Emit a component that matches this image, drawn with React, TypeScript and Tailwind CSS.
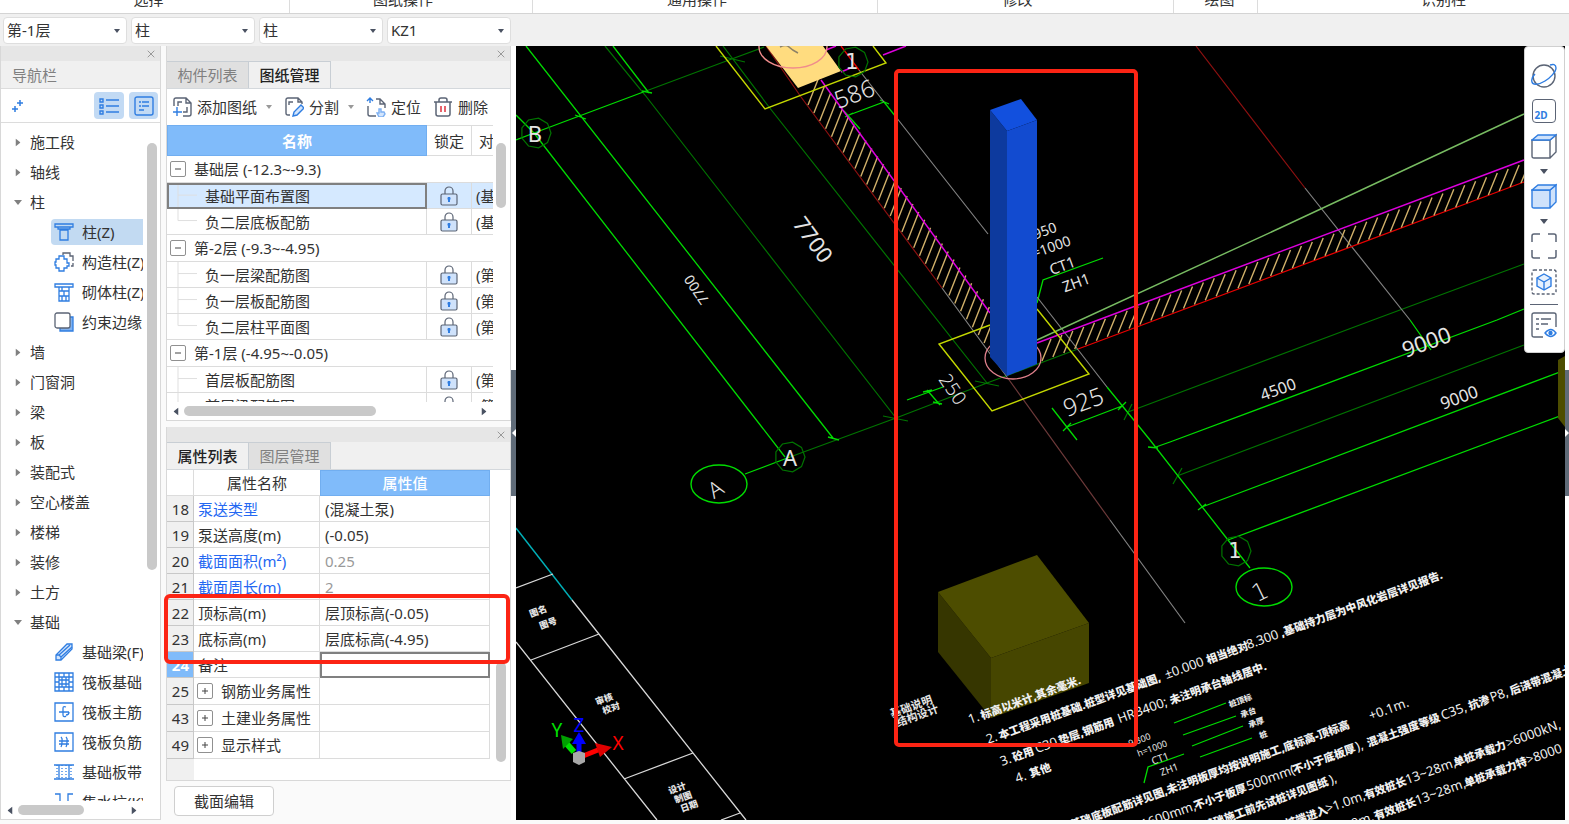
import React from 'react';
import clsx from 'clsx';
import { X } from 'lucide-react';

/* ---------- data ---------- */

const ribbonGroups = [
  { label: '选择', className: 'w-[290px] pl-2' },
  { label: '图纸操作', className: 'w-[243px] pr-4' },
  { label: '通用操作', className: 'w-[345px] pr-4' },
  { label: '修改', className: 'w-[296px] pr-4' },
  { label: '绘图', className: 'w-[84px] pl-2' },
  { label: '识别柱', className: 'flex-1 pl-[60px]' },
];

const filters = [
  { label: '楼层', value: '第-1层' },
  { label: '构件分类', value: '柱' },
  { label: '构件类型', value: '柱' },
  { label: '构件', value: 'KZ1' },
];

interface NavItem {
  label: string;
  icon: string;
  active?: boolean;
}

interface NavGroup {
  label: string;
  items?: NavItem[];
}

const navGroups: NavGroup[] = [
  { label: '施工段' },
  { label: '轴线' },
  {
    label: '柱',
    items: [
      { label: '柱(Z)', icon: 'column', active: true },
      { label: '构造柱(Z)', icon: 'structural' },
      { label: '砌体柱(Z)', icon: 'masonry' },
      { label: '约束边缘', icon: 'edge' },
    ],
  },
  { label: '墙' },
  { label: '门窗洞' },
  { label: '梁' },
  { label: '板' },
  { label: '装配式' },
  { label: '空心楼盖' },
  { label: '楼梯' },
  { label: '装修' },
  { label: '土方' },
  {
    label: '基础',
    items: [
      { label: '基础梁(F)', icon: 'beam' },
      { label: '筏板基础', icon: 'raft' },
      { label: '筏板主筋', icon: 'mainBar' },
      { label: '筏板负筋', icon: 'negBar' },
      { label: '基础板带', icon: 'strip' },
      { label: '集水坑(K)', icon: 'sump' },
    ],
  },
];

const drawingGroups = [
  { label: '基础层 (-12.3~-9.3)', floor: '(基', drawings: ['基础平面布置图', '负二层底板配筋'] },
  { label: '第-2层 (-9.3~-4.95)', floor: '(第', drawings: ['负一层梁配筋图', '负一层板配筋图', '负二层柱平面图'] },
  { label: '第-1层 (-4.95~-0.05)', floor: '(第', drawings: ['首层板配筋图', '首层梁配筋图'] },
];

const selectedDrawing = '基础平面布置图';

const properties = [
  { no: 18, name: '泵送类型', value: '(混凝土泵)', link: true },
  { no: 19, name: '泵送高度(m)', value: '(-0.05)' },
  { no: 20, name: '截面面积(m²)', value: '0.25', link: true, readOnly: true },
  { no: 21, name: '截面周长(m)', value: '2', link: true, readOnly: true },
  { no: 22, name: '顶标高(m)', value: '层顶标高(-0.05)' },
  { no: 23, name: '底标高(m)', value: '层底标高(-4.95)' },
  { no: 24, name: '备注', value: '', active: true },
  { no: 25, name: '钢筋业务属性', value: '', group: true },
  { no: 43, name: '土建业务属性', value: '', group: true },
  { no: 49, name: '显示样式', value: '', group: true },
];

/* ---------- icons ---------- */

const BLUE = '#2f7de1';
const SLATE = '#5b6475';

const navIconPaths: Record<string, React.ReactNode> = {
  column: <path d="M1 2h18v3H1zM4 5v2h12V5M6 8h8v10H6z" />,
  structural: (
    <>
      <path stroke={SLATE} d="M9 3V1h7v3h3v5M19 11v3h-2" />
      <path d="M5 4h5v3h3v4h2v3h-2v2h-3v3H5v-3H2v-3H1v-3h1V7h3z" />
    </>
  ),
  masonry: <path d="M1 2h18v3H1zM5 5v14h10V5M5 9h10M5 14h10M10 9v5M8 5v4M8 14v5M12 14v5" />,
  edge: (
    <>
      <path fill="#7fb1f0" d="M16 5h3v14H6v-3" />
      <rect x="1" y="1" width="15" height="15" rx="2" fill="#fff" stroke={SLATE} />
    </>
  ),
  beam: (
    <>
      <path fill="#d3e5fc" d="M2 18v-5L13 2h5v5L7 18z" />
      <path d="M2 13h3l2 2v3M5 13L16 3M7 15L18 5" />
    </>
  ),
  raft: <path d="M1 1h18v18H1zM5 1v18M15 1v18M1 5h18M1 15h18M10 1v4M10 15v4M1 10h4M15 10h4M8 5v10M12 5v10M5 8h10M5 12h10" />,
  mainBar: <path d="M1 1h18v18H1zM12 5c-3-1-3 0-3 2v6c0 2 2 2 3 1M5 10h10M15 10c0 2-1 3-3 3" />,
  negBar: <path d="M1 1h18v18H1zM5 9h10M5 12h10M7 5c2 2 1 3 1 5s0 3-1 5M12 5c2 2 1 3 1 5s0 3-1 5" />,
  strip: (
    <>
      <path d="M0 3h20M0 17h20M5 3v14M15 3v14" />
      <path strokeDasharray="1 2" d="M3 3v14M17 3v14M8 3v14M12 3v14" />
    </>
  ),
  sump: <path d="M1 2h5v10h8V2h5" />,
};

const NavIcon: React.FC<{ name: string }> = ({ name }) => (
  <svg viewBox="0 0 20 20" className="h-5 w-5 shrink-0" fill="none" stroke={BLUE} strokeWidth="1.3">
    {navIconPaths[name]}
  </svg>
);

const Caret: React.FC<{ className?: string }> = ({ className = 'h-1 w-[6px]' }) => (
  <svg viewBox="0 0 8 5" preserveAspectRatio="none" className={clsx('shrink-0', className)} fill="currentColor">
    <path d="M0 0h8L4 5z" />
  </svg>
);

const AddDrawingIcon = () => (
  <svg viewBox="0 0 20 20" className="h-5 w-5" fill="none" stroke={SLATE} strokeWidth="1.4">
    <path d="M2 9V3q0-2 2-2h10l5 5v11q0 2-2 2h-6M14 1v5h5M6 9V5h4M15 10v5h-4" />
    <path stroke={BLUE} d="M5 10v9M1 15h9" />
  </svg>
);

const SplitIcon = () => (
  <svg viewBox="0 0 20 20" className="h-5 w-5" fill="none" stroke={SLATE} strokeWidth="1.4">
    <path d="M6 18H4q-2 0-2-2V3q0-2 2-2h10l4 4v2M14 1v4h4M5 8V5h4" />
    <path stroke={BLUE} fill="#d3e5fc" d="M9 19l1-4 7-7 3 3-7 7z" />
  </svg>
);

const LocateIcon = () => (
  <svg viewBox="0 0 20 20" className="h-5 w-5" fill="none" stroke={SLATE} strokeWidth="1.4">
    <path d="M2 9v8q0 2 2 2h6M10 2h4l5 5v4M14 2v5h5" />
    <path stroke={BLUE} d="M1 4l3-3 3 3M4 1v5" />
    <path stroke="#7db0f2" fill="#d3e5fc" d="M13 12h2v3h3l1 2-2 3h-4l-2-4h2z" />
  </svg>
);

const TrashIcon = () => (
  <svg viewBox="0 0 20 20" className="h-5 w-5" fill="none" stroke={SLATE} strokeWidth="1.5">
    <path d="M1 5h18M6 5V3q0-2 2-2h4q2 0 2 2v2M3 5v12q0 2 2 2h10q2 0 2-2V5" />
    <path stroke="#e0323c" d="M8 9v6M12 9v6" />
  </svg>
);

const LockIcon = () => (
  <svg viewBox="0 0 18 20" className="mx-auto block h-5 w-[18px]" fill="none" stroke={SLATE} strokeWidth="1.2">
    <path d="M5 8V5a4 4 0 0 1 8 0v3" />
    <rect x="1" y="8" width="16" height="11" rx="1.5" fill="#cfe2fb" />
    <path stroke={BLUE} strokeWidth="2" d="M9 11v5M7.500 12.500h3" />
  </svg>
);

const OrbitIcon = () => (
  <svg viewBox="0 0 26 26" className="h-[26px] w-[26px]" fill="none" strokeWidth="1.4">
    <circle cx="13" cy="13" r="11" stroke={SLATE} />
    <path stroke={BLUE} d="M19 2c3-1 6-1 6 3s-6 10-11 13-12 5-13 1c-1-3 1-6 3-8" />
  </svg>
);

const CubeIcon: React.FC<{ solid?: boolean }> = ({ solid }) => (
  <svg viewBox="0 0 26 26" className="h-[26px] w-[26px]" fill="none" stroke={solid ? BLUE : SLATE} strokeWidth="1.4">
    <path fill={solid ? '#cfe2fb' : '#fff'} d="M1 7h18v18H3q-2 0-2-2zM19 7l6-5v17l-6 6" />
    <path stroke={BLUE} fill="#cfe2fb" d="M1 7l6-5h18l-6 5z" />
  </svg>
);

const FullscreenIcon = () => (
  <svg viewBox="0 0 26 26" className="h-[26px] w-[26px]" fill="none" stroke={SLATE} strokeWidth="1.5">
    <path d="M1 9V3q0-2 2-2h6M17 1h6q2 0 2 2v6M25 17v6q0 2-2 2h-6M9 25H3q-2 0-2-2v-6" />
  </svg>
);

const SelectBoxIcon = () => (
  <svg viewBox="0 0 26 26" className="h-[26px] w-[26px]" fill="none" strokeWidth="1.4">
    <rect x="1" y="1" width="24" height="24" rx="2" stroke={SLATE} strokeDasharray="3 2" />
    <path stroke={BLUE} fill="#e6f1fe" d="M13 5l7 4v8l-7 4-7-4V9z" />
    <path stroke={BLUE} d="M6 9l7 4 7-4M13 13v8" />
  </svg>
);

const DisplayIcon = () => (
  <svg viewBox="0 0 26 26" className="h-[26px] w-[26px]" fill="none" stroke={SLATE} strokeWidth="1.4">
    <path d="M12 25H3q-2 0-2-2V3q0-2 2-2h20q2 0 2 2v12M5 7h3M10 7h10M5 12h3M10 12h7M5 17h3" />
    <path stroke={BLUE} d="M14 21q6-7 11 0-5 7-11 0z" />
    <circle cx="19.500" cy="21" r="1.500" fill={BLUE} stroke={BLUE} />
  </svg>
);

/* ---------- shared pieces ---------- */

const PanelStrip = () => (
  <div className="flex h-[15px] shrink-0 items-center justify-end bg-[#e6e6e6] pr-[3px]">
    <button type="button" aria-label="关闭" className="text-[#999]">
      <X size={12} strokeWidth={2} />
    </button>
  </div>
);

const Tabs: React.FC<{ tabs: string[]; active: string }> = ({ tabs, active }) => (
  <div role="tablist" className="flex h-7 shrink-0 border-b border-[#d4d8dc] bg-[#f0f0f0]">
    {tabs.map((tab) => (
      <button
        key={tab}
        type="button"
        role="tab"
        aria-selected={tab === active}
        className={clsx(
          'w-[82px] border-t border-r border-[#c8ced4]',
          tab === active ? 'bg-[#f0f0f0] font-medium text-[#222]' : 'bg-[#e0e0e0] text-[#808080]'
        )}
      >
        {tab}
      </button>
    ))}
  </div>
);

const HScroll: React.FC<{ thumb: string; className?: string }> = ({ thumb, className }) => (
  <div className={clsx('flex h-[18px] shrink-0 items-center gap-1 pl-[5px] text-[#4a5262]', className)}>
    <Caret className="h-[5px] w-2 rotate-90" />
    <div className="flex-1">
      <div className={clsx('h-[10px] rounded-full bg-[#c9c9c9]', thumb)} />
    </div>
    <Caret className="h-[5px] w-2 -rotate-90" />
  </div>
);

const Expander: React.FC<{ open?: boolean }> = ({ open }) => (
  <button
    type="button"
    aria-label={open ? '折叠' : '展开'}
    className="flex h-4 w-4 shrink-0 items-center justify-center rounded-[2px] border border-[#909090] bg-white"
  >
    <svg viewBox="0 0 8 8" className="h-2 w-2" stroke="#444" fill="none">
      <path d={open ? 'M1 4h6' : 'M1 4h6M4 1v6'} />
    </svg>
  </button>
);

/* ---------- navigation ---------- */

const NavPanel = () => (
  <nav className="flex w-[161px] shrink-0 flex-col border border-t-0 border-[#d8d8d8] bg-white">
    <PanelStrip />
    <h2 className="flex h-[27px] shrink-0 items-center bg-[#f0f0f0] pl-[11px] text-[#808080]">导航栏</h2>
    <div className="flex h-[35px] shrink-0 items-center border-y border-[#dcdcdc] pr-[2px] pl-[10px]">
      <button type="button" aria-label="新建" className="mr-auto">
        <svg viewBox="0 0 14 14" className="h-[14px] w-[14px]" stroke={BLUE} strokeWidth="1.5">
          <path d="M9 1v6M6 4h6M4 7v6M1 10h6" />
        </svg>
      </button>
      <button type="button" aria-label="列表视图" className="flex h-[27px] w-[30px] items-center justify-center rounded bg-[#c2daf4]">
        <svg viewBox="0 0 20 18" className="h-[18px] w-5" fill="none" stroke={BLUE} strokeWidth="1.4">
          <path d="M7 3h13M7 9h13M7 15h13M1 2h3v3H1zM1 8h3v3H1zM1 14h3v3H1z" />
        </svg>
      </button>
      <button type="button" aria-label="卡片视图" className="ml-[5px] flex h-[27px] w-[29px] items-center justify-center rounded bg-[#c2daf4]">
        <svg viewBox="0 0 20 20" className="h-5 w-5" fill="none" stroke={BLUE} strokeWidth="1.4">
          <rect x="1" y="1" width="18" height="18" rx="2" />
          <path d="M5 6h2M8 6h7M5 10h2M8 10h7M5 14h5" />
        </svg>
      </button>
    </div>

    <div className="flex min-h-0 flex-1 pt-1">
      <ul className="w-[142px] overflow-hidden">
        {navGroups.map((group) => (
          <li key={group.label}>
            <button type="button" className="flex h-[30px] items-center text-[#333]">
              <Caret className={clsx('mr-2 ml-[13px] h-[5px] w-2 text-[#808080]', !group.items && '-rotate-90')} />
              {group.label}
            </button>
            {group.items && (
              <ul>
                {group.items.map((item) => (
                  <li key={item.label} className="flex h-[30px] items-center pl-[50px]">
                    <button
                      type="button"
                      className={clsx(
                        'flex h-[26px] flex-1 items-center gap-2 rounded-l pl-[3px] whitespace-nowrap',
                        item.active && 'bg-[#c2daf2]'
                      )}
                    >
                      <NavIcon name={item.icon} />
                      {item.label}
                    </button>
                  </li>
                ))}
              </ul>
            )}
          </li>
        ))}
      </ul>
      <div className="ml-1 pt-4">
        <div className="h-[427px] w-[10px] rounded-full bg-[#c9c9c9]" />
      </div>
    </div>
    <HScroll thumb="w-[66px]" className="pr-[22px]" />
  </nav>
);

/* ---------- drawing manager ---------- */

const DrawingPanel = () => (
  <section className="flex min-h-0 flex-col overflow-hidden border border-t-0 border-[#d8d8d8] bg-white">
    <PanelStrip />
    <Tabs tabs={['构件列表', '图纸管理']} active="图纸管理" />

    <div className="flex h-9 shrink-0 items-center gap-3 pl-[5px]">
      <button type="button" className="flex items-center gap-[5px]">
        <AddDrawingIcon />
        添加图纸
        <Caret className="ml-1 h-1 w-[6px] text-[#999]" />
      </button>
      <button type="button" className="flex items-center gap-[5px]">
        <SplitIcon />
        分割
        <Caret className="ml-1 h-1 w-[6px] text-[#999]" />
      </button>
      <button type="button" className="flex items-center gap-[5px]">
        <LocateIcon />
        定位
      </button>
      <button type="button" className="flex items-center gap-[5px]">
        <TrashIcon />
        删除
      </button>
    </div>

    <div className="flex min-h-0 flex-1">
      <div className="w-[326px] overflow-hidden">
        <table className="w-full table-fixed border-separate border-spacing-0">
          <colgroup>
            <col className="w-[260px]" />
            <col className="w-[45px]" />
            <col />
          </colgroup>
          <thead>
            <tr className="h-[31px]">
              <th className="border border-[#71aef0] bg-[#80bbfa] p-0 font-bold text-white">名称</th>
              <th className="border-t border-r border-b border-[#dcdcdc] p-0 font-normal">锁定</th>
              <th className="overflow-hidden border-t border-b border-[#dcdcdc] p-0 pl-[7px] text-left font-normal whitespace-nowrap">
                对
              </th>
            </tr>
          </thead>
          <tbody>
            {drawingGroups.map((group) => (
              <React.Fragment key={group.label}>
                <tr className="h-[27px]">
                  <td colSpan={3} className="border-b border-[#dcdcdc] p-0">
                    <div className="flex items-center gap-2 pl-[3px]">
                      <Expander open />
                      {group.label}
                    </div>
                  </td>
                </tr>
                {group.drawings.map((name, i) => {
                  const selected = name === selectedDrawing;
                  const last = i === group.drawings.length - 1;
                  return (
                    <tr key={name} className={clsx('h-[26px]', selected && 'bg-[#d5e9ff]')}>
                      <td className={clsx('p-0', selected ? 'border-2 border-[#808080]' : 'border-r border-b border-[#dcdcdc]')}>
                        <div className={clsx('flex items-center gap-2', selected ? 'h-[22px] pl-2' : 'h-[25px] pl-[10px]')}>
                          <svg viewBox="0 0 20 26" className="h-full w-5" fill="none" stroke="#dedede" preserveAspectRatio="none">
                            <path d={last ? 'M1 0v12h19' : 'M1 0v26M1 12h19'} />
                          </svg>
                          {name}
                        </div>
                      </td>
                      <td className="border-r border-b border-[#dcdcdc] p-0">
                        <LockIcon />
                      </td>
                      <td className="overflow-hidden border-b border-[#dcdcdc] p-0 pl-1 whitespace-nowrap">{group.floor}</td>
                    </tr>
                  );
                })}
              </React.Fragment>
            ))}
          </tbody>
        </table>
      </div>
      <div className="ml-[3px] pt-[18px]">
        <div className="h-[65px] w-[10px] rounded-full bg-[#c9c9c9]" />
      </div>
    </div>
    <HScroll thumb="w-[192px]" className="pr-[22px]" />
  </section>
);

/* ---------- property list ---------- */

const PropertyPanel = () => (
  <section className="flex min-h-0 flex-col">
    <div className="relative flex min-h-0 flex-1 flex-col border border-t-0 border-[#d8d8d8] bg-white">
      <PanelStrip />
      <Tabs tabs={['属性列表', '图层管理']} active="属性列表" />
      <div className="flex min-h-0 flex-1">
        <div className="flex w-[323px] flex-col">
          <table className="w-full table-fixed border-separate border-spacing-0">
            <colgroup>
              <col className="w-[27px]" />
              <col className="w-[126px]" />
              <col />
            </colgroup>
            <thead>
              <tr className="h-[26px]">
                <th className="border-r border-b border-[#dcdcdc] p-0" aria-label="序号" />
                <th className="border-b border-[#dcdcdc] p-0 font-normal">属性名称</th>
                <th className="border border-[#71aef0] bg-[#80bbfa] p-0 font-medium text-white">属性值</th>
              </tr>
            </thead>
            <tbody>
              {properties.map((row) => (
                <tr key={row.no} className={row.group ? 'h-[27px]' : 'h-[26px]'}>
                  <td
                    className={clsx(
                      'border-r border-b border-[#c8c8c8] p-0 pr-1 text-right',
                      row.active ? 'bg-[#80bbfa] font-bold text-white' : 'bg-[#f0f0f0]'
                    )}
                  >
                    {row.no}
                  </td>
                  <td className="border-r border-b border-[#dcdcdc] p-0 whitespace-nowrap">
                    {row.group ? (
                      <div className="flex items-center gap-2 pl-[3px]">
                        <Expander />
                        {row.name}
                      </div>
                    ) : (
                      <span className={clsx('pl-1', row.link && 'text-[#2468f2]')}>{row.name}</span>
                    )}
                  </td>
                  <td
                    className={clsx(
                      'p-0 whitespace-nowrap',
                      row.active ? 'border-2 border-[#808080]' : 'border-r border-b border-[#dcdcdc] pl-[5px]',
                      row.readOnly && 'text-[#999]'
                    )}
                  >
                    {row.value}
                  </td>
                </tr>
              ))}
            </tbody>
          </table>
          <div className="w-[27px] flex-1 bg-[#f0f0f0]" />
        </div>
        <div className="flex flex-1 flex-col justify-end pb-[18px] pl-[6px]">
          <div className="h-[100px] w-[10px] rounded-full bg-[#c9c9c9]" />
        </div>
      </div>
      {/* Elevation rows callout */}
      <div className="pointer-events-none absolute top-[167px] right-0 -left-[3px] h-[70px] rounded-md border-4 border-[#fc2414]" />
    </div>
    <div className="flex h-[39px] shrink-0 items-center pl-2">
      <button type="button" className="h-[30px] w-[100px] rounded border border-[#cfcfcf] bg-white">
        截面编辑
      </button>
    </div>
  </section>
);

/* ---------- 3D viewport ---------- */

const G = '#00dc00';
const DG = '#007400';

const brightLines = [
  'M526 46L833 438', 'M516 115L534 133L785 457', 'M613 46L649 93', 'M516 140L534 133L646 91',
  'M745 474L790 457', 'M849 115L884 102L896 117', 'M844 111l16 18', 'M1107 387L1150 440L1228 540L1250 568',
  'M1153 448L1170 442L1497 320L1524 309', 'M1202 507L1565 370', 'M1228 540L1565 414', 'M1410 320L1431 350',
  'M907 400L943 387', 'M927 390L940 405', 'M1052 408L1077 440', 'M1067 427L1122 406',
  'M1037 303L1043 280L1103 258', 'M1174 723L1226 703', 'M1183 735L1236 716', 'M1192 746L1243 726',
  'M1200 757L1252 738', 'M1144 783L1148 767L1184 754',
  'M575 115l11 4M642 91l10 2M828 437l11 3M845 117l8-4M880 100l9 4M923 392l9-2M933 402l9 2M1063 431l8-8M1118 410l8-8M1148 447l10 1M1198 510l8-6',
];

const dimLines = [
  'M605 46L645 95L896 418', 'M723 46L769 107L987 383', 'M646 91L729 60L764 47', 'M790 457L896 418L987 383L1078 349',
  'M1128 412L1373 320L1524 264', 'M1177 476L1524 345', 'M720 56l25 6M883 416l25 5M975 381l24 5M1124 420l8-16M1173 484l9-16',
];

interface Point {
  x: number;
  y: number;
}

const hatch = (from: Point, to: Point, count: number, dx: number, dy: number) =>
  Array.from({ length: count }, (_, i) => {
    const t = i / (count - 1);
    const x = from.x + (to.x - from.x) * t;
    const y = from.y + (to.y - from.y) * t;
    return `M${x.toFixed(1)} ${y.toFixed(1)}l${dx} ${dy}`;
  }).join('');

const leftHatch = hatch({ x: 808, y: 105 }, { x: 990, y: 351 }, 32, 11, -28);
const rightHatch = hatch({ x: 1042, y: 361 }, { x: 1521, y: 183 }, 45, 9, -22);

const octagon = (cx: number, cy: number, r: number) =>
  Array.from({ length: 9 }, (_, i) => {
    const a = (i / 9) * Math.PI * 2;
    return `${(cx + r * Math.cos(a)).toFixed(1)},${(cy + r * Math.sin(a)).toFixed(1)}`;
  }).join(' ');

// offset along the line, text, true when it is a large latin run
type NoteRun = [number, string, boolean?];

const notes: { x: number; y: number; runs: NoteRun[] }[] = [
  { x: 970, y: 724, runs: [[0, '1.', true], [13, '标高以米计,其余毫米.']] },
  {
    x: 988,
    y: 744,
    runs: [
      [0, '2.', true], [13, '本工程采用桩基础.桩型详见基础图,'], [190, '±0.000', true],
      [234, '相当绝对'], [277, '8.300', true], [313, ',基础持力层为中风化岩层详见报告.'],
    ],
  },
  {
    x: 1002,
    y: 766,
    runs: [[0, '3.', true], [13, '砼用'], [37, 'C30', true], [62, '垫层,钢筋用'], [125, 'HRB400;', true], [180, '未注明承台轴线居中.']],
  },
  { x: 1017, y: 783, runs: [[0, '4.', true], [15, '其他']] },
  {
    x: 1072,
    y: 829,
    runs: [[0, '基础底板配筋详见图,未注明板厚均按说明施工,底标高-顶标高'], [318, '+0.1m.', true]],
  },
  {
    x: 1143,
    y: 829,
    runs: [
      [0, '1600mm,', true], [56, '不小于板厚'], [112, '500mm(', true], [161, '不小于底板厚'], [228, '),', true],
      [240, '混凝土强度等级'], [319, 'C35,', true], [348, '抗渗'], [371, 'P8,', true], [392, '后浇带混凝土'],
    ],
  },
  { x: 1205, y: 830, runs: [[0, '基础施工前先试桩详见图纸'], [134, '),', true]] },
  {
    x: 1287,
    y: 828,
    runs: [
      [0, '桩端进入'], [43, '>1.0m,', true], [84, '有效桩长'], [128, '13~28m,', true], [179, '单桩承载力'],
      [235, '>6000kN,', true],
    ],
  },
  {
    x: 1340,
    y: 833,
    runs: [[14, '0m,', true], [38, '有效桩长'], [82, '13~28m,', true], [134, '单桩承载力特'], [200, '>8000', true]],
  },
];

const CadText: React.FC<{ x: number; y: number; angle?: number; className: string; children: React.ReactNode }> = ({
  x,
  y,
  angle = -20,
  className,
  children,
}) => (
  <text
    transform={`translate(${x} ${y}) rotate(${angle})`}
    textAnchor="middle"
    dominantBaseline="central"
    className={clsx('fill-[#e4e4e4]', className)}
  >
    {children}
  </text>
);

const Scene = () => (
  <svg
    viewBox="516 46 1049 774"
    preserveAspectRatio="xMinYMin slice"
    className="block h-full w-full font-['Noto_Sans','Noto_Sans_CJK_SC',sans-serif]"
    fill="none"
    role="img"
    aria-label="三维视图"
  >
    {/* Grid axes */}
    <path d={dimLines.join('')} stroke={DG} strokeWidth="1.2" />
    <path d={brightLines.join('')} stroke={G} strokeWidth="1.3" />
    <path d="M896 117L988 234M1037 297L1107 387M942 288L1007 377M1110 520L1185 623M1305 188L1410 320M859 70L884 102" stroke="#808080" strokeWidth="1.2" />
    <path d="M1007 377L1110 520" stroke="#6e3a3a" strokeWidth="1.2" />
    <path d="M1196 46L1305 188M801 97L942 288M766 46L801 97" stroke="#8c1010" strokeWidth="1.2" />
    <path d="M841 46L859 70M1078 349L1524 182" stroke="#e80000" strokeWidth="1.3" />

    {/* Walls */}
    <path d={leftHatch + rightHatch} stroke="#d0b06a" strokeWidth="1.4" />
    <path d="M821 80L990 313M1037 343L1524 160M883 55L906 46M826 50L836 46M841 72L853 67" stroke="#dc00dc" strokeWidth="1.5" />
    <path d="M1037 340L1280 228L1524 114" stroke="#78bc62" strokeWidth="1.4" />

    {/* Caps and piles */}
    <path d="M766 46L798 88L841 71L823 46z" fill="#ffdc7f" />
    <path d="M780 47q6-3 9 0t9 6" stroke="#8d8166" strokeWidth="1.5" />
    <ellipse cx="793" cy="47" rx="34" ry="21" stroke="#f08c8c" strokeWidth="1.4" />
    <path d="M716 46L765 109L886 63L873 46M990 325L939 344L992 411L1089 374L1037 309" stroke="#c4d800" strokeWidth="1.4" />
    <ellipse cx="1013" cy="358" rx="28" ry="21" stroke="#e0808c" strokeWidth="1.3" />

    {/* Axis bubbles */}
    <g stroke={DG} strokeWidth="1.2">
      <polygon points={octagon(536, 133, 15)} />
      <polygon points={octagon(853, 62, 15)} />
      <polygon points={octagon(790, 457, 15)} />
      <polygon points={octagon(1236, 551, 15)} />
    </g>
    <ellipse cx="719" cy="484" rx="28" ry="19" stroke={G} strokeWidth="1.4" />
    <ellipse cx="1264" cy="587" rx="28" ry="19" stroke={G} strokeWidth="1.4" />
    <CadText x={535} y={133} angle={0} className="text-[22px]">B</CadText>
    <CadText x={852} y={62} angle={0} className="font-['DejaVu_Sans',sans-serif] text-[21px]">1</CadText>
    <CadText x={790} y={457} angle={0} className="text-[22px]">A</CadText>
    <CadText x={1235} y={551} angle={0} className="font-['DejaVu_Sans',sans-serif] text-[21px]">1</CadText>
    <CadText x={715} y={488} angle={-32} className="text-[22px] font-light">A</CadText>
    <CadText x={1260} y={592} angle={-26} className="font-['DejaVu_Sans',sans-serif] text-[24px] font-light">1</CadText>

    {/* Dimensions */}
    <CadText x={854} y={93} className="text-[24px] font-light">586</CadText>
    <CadText x={814} y={239} angle={54} className="text-[22px]">7700</CadText>
    <CadText x={696} y={290} angle={236} className="text-[14px]">7700</CadText>
    <CadText x={953} y={389} angle={56} className="text-[19px] font-light">250</CadText>
    <CadText x={1083} y={401} className="text-[24px] font-light">925</CadText>
    <CadText x={1278} y={389} className="text-[16px]">4500</CadText>
    <CadText x={1426} y={341} className="text-[22px]">9000</CadText>
    <CadText x={1459} y={397} className="text-[17px]">9000</CadText>
    <CadText x={1037} y={233} className="text-[14px]">-4.950</CadText>
    <CadText x={1047} y={248} className="text-[14px]">h=1000</CadText>
    <CadText x={1062} y={265} className="text-[15px]">CT1</CadText>
    <CadText x={1076} y={282} className="text-[15px]">ZH1</CadText>
    <CadText x={1138} y={740} className="text-[9px]">-9.300</CadText>
    <CadText x={1152} y={748} className="text-[9px]">h=1000</CadText>
    <CadText x={1160} y={758} className="text-[10px]">CT1</CadText>
    <CadText x={1169} y={769} className="text-[10px]">ZH1</CadText>

    {/* Column */}
    <path d="M990 110L1007 131V376L990 357z" fill="#0d3a9e" />
    <path d="M1007 131L1037 120V364L1007 376z" fill="#124bd0" />
    <path d="M990 110L1021 99L1037 120L1007 131z" fill="#1250de" />

    {/* Foundation blocks */}
    <path d="M938 592L991 658V718L938 652z" fill="#363600" />
    <path d="M991 658L1089 623V683L991 718z" fill="#464600" />
    <path d="M938 592L1037 555L1089 623L991 658z" fill="#4d4d00" />
    <path d="M1565 356l-7 4v58l7 9z" fill="#4d4d00" />

    {/* Title block */}
    <path d="M516 528L572 600" stroke="#00b0b8" strokeWidth="1.4" />
    <path
      d="M572 600L746 820M516 642L657 820M516 588L553 574M531 660L599 634M624 779L693 753M721 820L740 813"
      stroke="#d8d8d8"
      strokeWidth="1.3"
    />
    <CadText x={538} y={611} className="text-[9px] font-black">图名</CadText>
    <CadText x={548} y={623} className="text-[9px] font-black">图号</CadText>
    <CadText x={604} y={699} className="text-[9px] font-black">审核</CadText>
    <CadText x={611} y={708} className="text-[9px] font-black">校对</CadText>
    <CadText x={677} y={788} className="text-[9px] font-black">设计</CadText>
    <CadText x={683} y={797} className="text-[9px] font-black">制图</CadText>
    <CadText x={689} y={806} className="text-[9px] font-black">日期</CadText>

    {/* Design notes */}
    <CadText x={911} y={706} className="text-[11px] font-bold">基础说明</CadText>
    <CadText x={917} y={715} className="text-[11px] font-bold">结构设计</CadText>
    <CadText x={1240} y={700} className="text-[8px] font-black">桩顶标</CadText>
    <CadText x={1248} y={712} className="text-[8px] font-black">承台</CadText>
    <CadText x={1256} y={722} className="text-[8px] font-black">承厚</CadText>
    <CadText x={1263} y={734} className="text-[8px] font-black">桩</CadText>
    {notes.map((note) => (
      <g key={note.x} transform={`translate(${note.x} ${note.y}) rotate(-20)`} className="fill-[#f0f0f0]">
        {note.runs.map(([offset, text, large]) => (
          <text key={offset} x={offset} y={0} className={large ? 'text-[13px]' : 'text-[11px] font-black'}>
            {text}
          </text>
        ))}
      </g>
    ))}

    {/* Coordinate gizmo */}
    <path d="M574 752L566 743" stroke="#00e000" strokeWidth="6" />
    <path d="M561 735L573 739L563 749z" fill="#00a000" />
    <path d="M579 756V742" stroke="#0000ff" strokeWidth="5" />
    <path d="M579 732L586 744H572z" fill="#0000ff" />
    <path d="M583 756L598 750" stroke="#ff0000" strokeWidth="5" />
    <path d="M595 743L612 747L600 757z" fill="#e00000" />
    <path d="M573 753l6-2 6 2v9l-6 3-6-3z" fill="#a8a8a8" />
    <g textAnchor="middle" className="text-[19px]">
      <text x="557" y="737" fill="#00e000">Y</text>
      <text x="579" y="732" fill="#0000ff">Z</text>
      <text x="618" y="750" fill="#ff0000">X</text>
    </g>

    {/* Column and footing callout */}
    <rect x="896" y="71" width="240" height="674" rx="3" stroke="#fc2414" strokeWidth="4" />
  </svg>
);

const ViewToolbar = () => (
  <div
    role="toolbar"
    aria-label="视图"
    className="absolute top-0 right-0 flex h-[307px] w-[41px] flex-col items-center rounded border border-[#d0d0d0] bg-white pt-4 pr-[2px]"
  >
    <button type="button" aria-label="动态观察"><OrbitIcon /></button>
    <button
      type="button"
      aria-label="二维视图"
      className="mt-[10px] flex h-6 w-6 shrink-0 items-end rounded-sm border border-[#5b6475] pl-[2px] text-[10px] leading-[14px] font-bold text-[#2f7de1]"
    >
      2D
    </button>
    <button type="button" aria-label="三维视图" className="mt-[10px]"><CubeIcon /></button>
    <Caret className="mt-[10px] h-[5px] w-2 text-[#4a5262]" />
    <button type="button" aria-label="实体显示" className="mt-[9px]"><CubeIcon solid /></button>
    <Caret className="mt-[10px] h-[5px] w-2 text-[#4a5262]" />
    <button type="button" aria-label="全屏" className="mt-[9px]"><FullscreenIcon /></button>
    <button type="button" aria-label="局部三维" className="mt-[10px]"><SelectBoxIcon /></button>
    <div className="mt-[9px] h-px w-7 shrink-0 bg-[#5b6475]" />
    <button type="button" aria-label="显示设置" className="mt-[7px]"><DisplayIcon /></button>
  </div>
);

const CollapseHandle: React.FC<{ label: string; right?: boolean; className: string }> = ({ label, right, className }) => (
  <div className={clsx('flex shrink-0 flex-col justify-center overflow-hidden bg-white', className)}>
    <button type="button" aria-label={label} className="flex h-[126px] items-center justify-center bg-[#5f6b78] text-white">
      <svg viewBox="0 0 4 8" className="h-2 w-1" fill="currentColor">
        <path d={right ? 'M0 0l4 4-4 4z' : 'M4 0L0 4l4 4z'} />
      </svg>
    </button>
  </div>
);

/* ---------- app ---------- */

const App: React.FC = () => (
  <div className="flex h-screen flex-col overflow-hidden bg-[#fafafa] font-['Noto_Sans','Noto_Sans_CJK_SC',sans-serif] text-[15px] leading-5 text-[#333]">
    <header className="flex h-[13px] shrink-0 items-end overflow-hidden bg-white">
      {ribbonGroups.map((group) => (
        <div
          key={group.label}
          className={clsx(
            'flex h-5 shrink-0 items-end justify-center border-r border-[#dcdcdc] pb-1 last:border-r-0',
            group.className
          )}
        >
          <span>{group.label}</span>
        </div>
      ))}
    </header>

    <div className="flex h-[33px] shrink-0 items-center gap-1 border-t border-[#d4d4d4] bg-[#f0f0f0] px-[3px]">
      {filters.map((filter) => (
        <div key={filter.label} className="relative w-[124px]">
          <select
            aria-label={filter.label}
            defaultValue={filter.value}
            className="h-[27px] w-full appearance-none rounded border border-[#dedede] bg-white pl-[3px]"
          >
            <option>{filter.value}</option>
          </select>
          <Caret className="pointer-events-none absolute top-3 right-[7px] h-1 w-[6px] text-[#4a5262]" />
        </div>
      ))}
    </div>

    <main className="flex min-h-0 flex-1">
      <NavPanel />
      <div className="ml-[5px] grid w-[345px] shrink-0 grid-cols-1 grid-rows-[minmax(0,375fr)_minmax(0,393fr)] gap-[6px]">
        <DrawingPanel />
        <PropertyPanel />
      </div>
      <CollapseHandle label="收起左侧面板" className="w-[5px]" />
      <div className="relative min-w-0 flex-1 overflow-hidden bg-black">
        <Scene />
        <ViewToolbar />
      </div>
      <CollapseHandle label="展开右侧面板" right className="w-1" />
    </main>
    <footer className="h-1 shrink-0 bg-[#fafafa]" />
  </div>
);

export default App;
